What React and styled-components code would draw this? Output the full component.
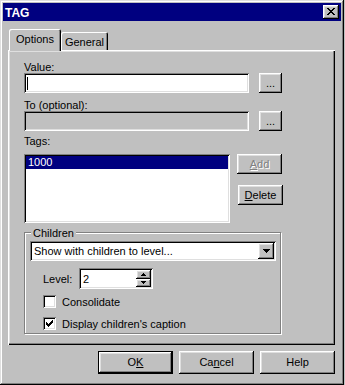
import React from 'react';
import styled, { createGlobalStyle, css } from 'styled-components';

const GlobalStyle = createGlobalStyle`
  html, body { margin: 0; padding: 0; background: #c0c0c0; }
  body {
    font-family: "Liberation Sans", Arial, sans-serif;
    font-size: 11px;
    color: #000;
  }
  * { box-sizing: border-box; }
`;

const raised = css`
  box-shadow: inset -1px -1px #000, inset 1px 1px #fff,
    inset -2px -2px #808080, inset 2px 2px #dfdfdf;
`;
const sunken = css`
  box-shadow: inset 1px 1px #808080, inset -1px -1px #fff,
    inset 2px 2px #000, inset -2px -2px #dfdfdf;
`;

const Window = styled.div`
  width: 344px;
  height: 385px;
  padding: 3px;
  background: #c0c0c0;
  box-shadow: inset -1px -1px #000, inset 1px 1px #dfdfdf,
    inset -2px -2px #808080, inset 2px 2px #fff;
  display: flex;
  flex-direction: column;
`;

const TitleBar = styled.div`
  height: 18px;
  background: #000080;
  display: flex;
  align-items: flex-start;
  justify-content: space-between;
  padding: 0 2px 0 2px;
`;

const Title = styled.span`
  color: #fff;
  font-weight: bold;
  font-size: 12px;
  line-height: 18px;
  margin-top: 1px;
`;

const CaptionButton = styled.div`
  width: 16px;
  height: 14px;
  margin-top: 2px;
  background: #c0c0c0;
  ${raised};
  display: flex;
  align-items: center;
  justify-content: center;
  padding-bottom: 1px;
`;

const Body = styled.div`
  padding: 8px 6px 0 5px;
  display: flex;
  flex-direction: column;
`;

const TabStrip = styled.div`
  display: flex;
  align-items: flex-end;
  height: 21px;
  padding-left: 1px;
  position: relative;
  z-index: 1;
`;

const Tab = styled.div`
  width: ${(p) => p.$w}px;
  height: ${(p) => (p.$active ? 22 : 18)}px;
  margin-bottom: ${(p) => (p.$active ? -1 : 0)}px;
  background: #c0c0c0;
  border-radius: 2px 2px 0 0;
  box-shadow: inset 1px 1px #fff, inset -1px 0 #000, inset -2px 0 #808080;
  display: flex;
  justify-content: center;
  padding-top: 4px;
  line-height: 13px;
`;

const TabPanel = styled.div`
  height: 295px;
  padding: 11px 0 0 16px;
  box-shadow: inset 1px 1px #fff, inset -1px -1px #000,
    inset -2px -2px #808080, inset 2px 2px #dfdfdf;
  display: flex;
  flex-direction: column;
  align-items: flex-start;
`;

const FieldLabel = styled.div`
  line-height: 12px;
  height: 12px;
  margin-top: ${(p) => p.$gap || 0}px;
  white-space: nowrap;
`;

const InputRow = styled.div`
  display: flex;
  gap: 10px;
  height: 20px;
`;

const TextField = styled.div`
  width: ${(p) => p.$w}px;
  height: ${(p) => p.$h || 20}px;
  background: ${(p) => (p.$disabled ? '#c0c0c0' : '#fff')};
  ${sunken};
  display: flex;
  align-items: center;
  padding-left: 3px;
`;

const Caret = styled.span`
  width: 1px;
  height: 13px;
  background: #000;
`;

const Button = styled.div`
  width: ${(p) => p.$w}px;
  height: ${(p) => p.$h}px;
  background: #c0c0c0;
  ${(p) =>
    p.$default
      ? css`
          box-shadow: inset 0 0 0 1px #000, inset -2px -2px #000,
            inset 2px 2px #fff, inset -3px -3px #808080,
            inset 3px 3px #dfdfdf;
        `
      : raised};
  display: flex;
  align-items: center;
  justify-content: center;
  padding-bottom: ${(p) => p.$pb ?? 1}px;
  margin-left: ${(p) => p.$ml || 0}px;
  line-height: 12px;
  white-space: nowrap;
  color: ${(p) => (p.$disabled ? '#808080' : '#000')};
  text-shadow: ${(p) => (p.$disabled ? '1px 1px 0 #fff' : 'none')};
`;

const Accel = styled.span`
  text-decoration: underline;
  text-underline-offset: 1px;
`;

const ListRow = styled.div`
  display: flex;
  gap: 7px;
  margin-top: 7px;
`;

const ListBox = styled.div`
  width: 206px;
  height: 69px;
  background: #fff;
  ${sunken};
  padding: 2px;
`;

const ListItem = styled.div`
  height: 13px;
  line-height: 13px;
  padding-left: 2px;
  background: ${(p) => (p.$selected ? '#000080' : 'transparent')};
  color: ${(p) => (p.$selected ? '#fff' : '#000')};
`;

const ButtonColumn = styled.div`
  display: flex;
  flex-direction: column;
  gap: 11px;
`;

const Group = styled.div`
  position: relative;
  width: 257px;
  margin-top: 9px;
  border: 1px solid #808080;
  box-shadow: inset 1px 1px #fff, 1px 1px #fff;
  padding: 8px 4px 3px 5px;
  display: flex;
  flex-direction: column;
  align-items: flex-start;
`;

const Legend = styled.span`
  position: absolute;
  top: -6px;
  left: 6px;
  padding: 0 2px;
  line-height: 12px;
  background: #c0c0c0;
`;

const Combo = styled.div`
  width: 246px;
  height: 20px;
  background: #fff;
  ${sunken};
  padding: 2px;
  display: flex;
  align-items: center;
`;

const ComboText = styled.span`
  flex: 1;
  padding-left: 2px;
  line-height: 12px;
  padding-bottom: 1px;
`;

const ArrowButton = styled.div`
  width: 16px;
  height: 16px;
  background: #c0c0c0;
  ${raised};
  display: flex;
  align-items: center;
  justify-content: center;
`;

const LevelRow = styled.div`
  display: flex;
  align-items: center;
  margin-top: 7px;
  padding-left: 13px;
`;

const LevelLabel = styled.span`
  width: 36px;
  line-height: 12px;
`;

const Spinner = styled.div`
  width: 74px;
  height: 21px;
  background: #fff;
  ${sunken};
  padding: 2px 2px 2px 4px;
  display: flex;
  align-items: stretch;
`;

const SpinValue = styled.span`
  flex: 1;
  line-height: 12px;
  align-self: center;
`;

const SpinButtons = styled.div`
  width: 15px;
  display: flex;
  flex-direction: column;
`;

const SpinButton = styled.div`
  flex: 1;
  background: #c0c0c0;
  ${raised};
  display: flex;
  align-items: center;
  justify-content: center;
`;

const CheckRow = styled.label`
  display: flex;
  align-items: center;
  gap: 6px;
  height: 13px;
  margin-top: ${(p) => p.$gap}px;
  padding-left: 13px;
  line-height: 12px;
  white-space: nowrap;
`;

const CheckBox = styled.span`
  width: 13px;
  height: 13px;
  background: #fff;
  ${sunken};
  display: flex;
  align-items: center;
  justify-content: center;
`;

const ButtonBar = styled.div`
  display: flex;
  justify-content: flex-end;
  gap: 6px;
  margin-top: 6px;
`;

const Glyph = ({ rows }) => {
  const w = rows[0].length;
  const h = rows.length;
  const rects = [];
  rows.forEach((r, y) =>
    r.split('').forEach((c, x) => {
      if (c === 'X') rects.push(<rect key={`${x}-${y}`} x={x} y={y} width="1" height="1" />);
    })
  );
  return (
    <svg width={w} height={h} viewBox={`0 0 ${w} ${h}`} shapeRendering="crispEdges" fill="#000">
      {rects}
    </svg>
  );
};

const CLOSE = ['XX....XX', '.XX..XX.', '..XXXX..', '...XX...', '..XXXX..', '.XX..XX.', 'XX....XX'];
const DOWN = ['XXXXXXX', '.XXXXX.', '..XXX..', '...X...'];
const SPIN_UP = ['..X..', '.XXX.', 'XXXXX'];
const SPIN_DOWN = ['XXXXX', '.XXX.', '..X..'];
const CHECK = ['......X', '.....XX', 'X...XXX', 'XX.XXX.', 'XXXXX..', '.XXX...', '..X....'];

export default function App() {
  return (
    <>
      <GlobalStyle />
      <Window>
        <TitleBar>
          <Title>TAG</Title>
          <CaptionButton>
            <Glyph rows={CLOSE} />
          </CaptionButton>
        </TitleBar>
        <Body>
          <TabStrip>
            <Tab $active $w={52}>Options</Tab>
            <Tab $w={47}>General</Tab>
          </TabStrip>
          <TabPanel>
            <FieldLabel>Value:</FieldLabel>
            <InputRow>
              <TextField $w={225}>
                <Caret />
              </TextField>
              <Button $w={23} $h={20}>...</Button>
            </InputRow>
            <FieldLabel $gap={6}>To (optional):</FieldLabel>
            <InputRow>
              <TextField $w={225} $disabled />
              <Button $w={23} $h={20}>...</Button>
            </InputRow>
            <FieldLabel $gap={4}>Tags:</FieldLabel>
            <ListRow>
              <ListBox>
                <ListItem $selected>1000</ListItem>
              </ListBox>
              <ButtonColumn>
                <Button $w={45} $h={20} $disabled>
                  <Accel>A</Accel>dd
                </Button>
                <Button $w={45} $h={20} $ml={1}>
                  <Accel>D</Accel>elete
                </Button>
              </ButtonColumn>
            </ListRow>
            <Group>
              <Legend>Children</Legend>
              <Combo>
                <ComboText>Show with children to level...</ComboText>
                <ArrowButton>
                  <Glyph rows={DOWN} />
                </ArrowButton>
              </Combo>
              <LevelRow>
                <LevelLabel>Level:</LevelLabel>
                <Spinner>
                  <SpinValue>2</SpinValue>
                  <SpinButtons>
                    <SpinButton>
                      <Glyph rows={SPIN_UP} />
                    </SpinButton>
                    <SpinButton>
                      <Glyph rows={SPIN_DOWN} />
                    </SpinButton>
                  </SpinButtons>
                </Spinner>
              </LevelRow>
              <CheckRow $gap={6}>
                <CheckBox />
                Consolidate
              </CheckRow>
              <CheckRow $gap={9}>
                <CheckBox>
                  <Glyph rows={CHECK} />
                </CheckBox>
                Display children's caption
              </CheckRow>
            </Group>
          </TabPanel>
          <ButtonBar>
            <Button $w={75} $h={23} $default $pb={2}>
              O<Accel>K</Accel>
            </Button>
            <Button $w={75} $h={23} $pb={2}>
              Ca<Accel>n</Accel>cel
            </Button>
            <Button $w={75} $h={23} $pb={2}>
              Help
            </Button>
          </ButtonBar>
        </Body>
      </Window>
    </>
  );
}
